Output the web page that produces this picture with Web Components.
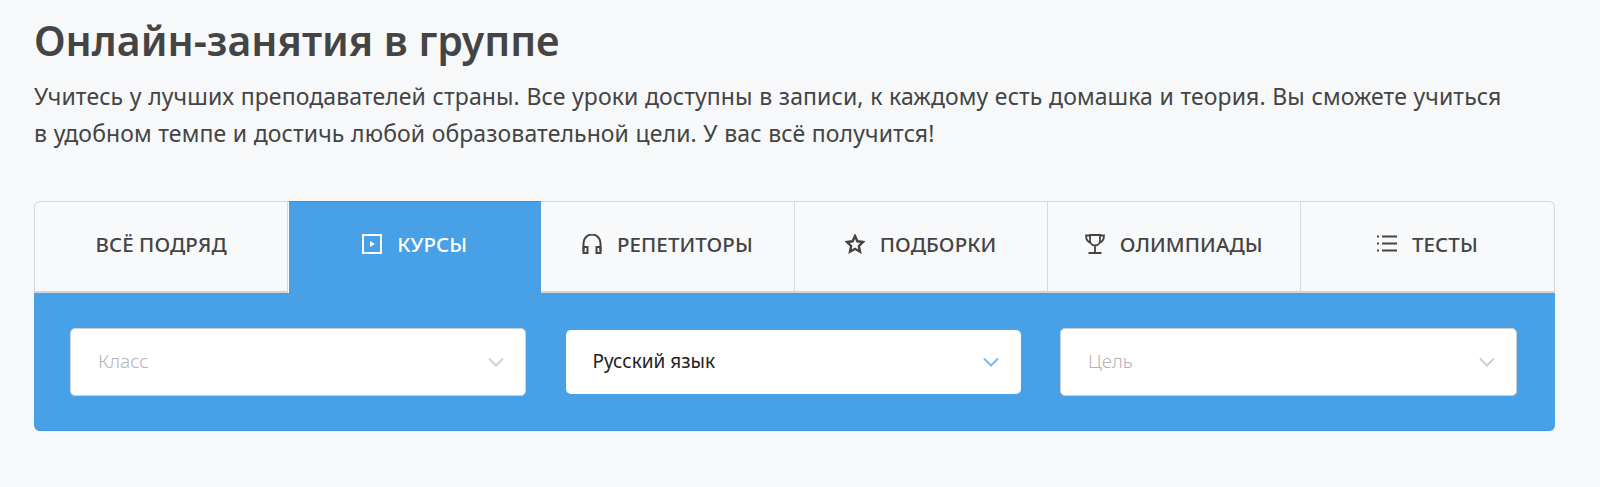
<!DOCTYPE html>
<html lang="ru">
<head>
<meta charset="utf-8">
<title>Онлайн-занятия в группе</title>
<style>
  html, body { margin: 0; background: #f7f8fa; }
  body { font-family: "Noto Sans", "Open Sans", sans-serif; }
</style>
</head>
<body>

<course-section>
  <span slot="title">Онлайн-занятия в группе</span>
  <span slot="lead">Учитесь у лучших преподавателей страны. Все уроки доступны в записи, к каждому есть домашка и теория. Вы сможете учиться<br>в удобном темпе и достичь любой образовательной цели. У вас всё получится!</span>
  <tab-bar slot="tabs">
    <tab-item>ВСЁ ПОДРЯД</tab-item>
    <tab-item active icon="play">КУРСЫ</tab-item>
    <tab-item icon="headphones">РЕПЕТИТОРЫ</tab-item>
    <tab-item icon="star">ПОДБОРКИ</tab-item>
    <tab-item icon="trophy">ОЛИМПИАДЫ</tab-item>
    <tab-item icon="list">ТЕСТЫ</tab-item>
  </tab-bar>
  <filter-panel slot="filters">
    <filter-select placeholder="Класс"></filter-select>
    <filter-select value="Русский язык"></filter-select>
    <filter-select placeholder="Цель"></filter-select>
  </filter-panel>
</course-section>

<script>
const ICONS = {
  play: '<rect x="1" y="1" width="18" height="18" fill="none" stroke="currentColor" stroke-width="2"/><path d="M8 7l5 3-5 3z" fill="currentColor"/>',
  headphones: '<path d="M1.500 17v-8a8.500 8.500 0 0 1 17 0v8" fill="none" stroke="currentColor" stroke-width="2"/><path d="M1.500 13h4v6h-4zM14.500 13h4v6h-4z" fill="none" stroke="currentColor" stroke-width="2"/>',
  star: '<path d="M10 2l2.400 5.300 5.600.7-4.100 3.900 1.100 5.800-5-2.900-5 2.900 1.100-5.800-4.100-3.900 5.600-.7z" fill="none" stroke="currentColor" stroke-width="2.400" stroke-linejoin="miter"/>',
  trophy: '<path d="M5 1h10v5.500a5 5 0 0 1-10 0zM5 1.500h-4c0 4.500 1.500 6.500 5 7.500M15 1.500h4c0 4.500-1.500 6.500-5 7.500M10 11.500v6.500M3.500 19h13" fill="none" stroke="currentColor" stroke-width="1.800"/>',
  list: '<path d="M5 2.500h15M5 9.500h15M5 16.500h15" stroke="currentColor" stroke-width="2"/><path d="M0 1.500h2v2h-2zM0 8.500h2v2h-2zM0 15.500h2v2h-2z" fill="currentColor"/>'
};

class CourseSection extends HTMLElement {
  constructor() {
    super();
    this.attachShadow({mode: 'open'}).innerHTML = `
      <style>
        :host { display: block; padding: 0 45px 0 34px; height: 487px; box-sizing: border-box; color: #444; }
        h1 { margin: 0; padding-top: 12px; font-size: 41px; line-height: 56px; font-weight: 600; color: #444; }
        p { margin: 10px 0 0; font-size: 23px; line-height: 37px; letter-spacing: .1px; word-spacing: .5px; font-weight: 400; color: #444; }
        .board { margin-top: 49px; }
      </style>
      <h1><slot name="title"></slot></h1>
      <p><slot name="lead"></slot></p>
      <div class="board">
        <slot name="tabs"></slot>
        <slot name="filters"></slot>
      </div>`;
  }
}

class TabBar extends HTMLElement {
  constructor() {
    super();
    this.attachShadow({mode: 'open'}).innerHTML = `
      <style>
        :host { display: grid; grid-template-columns: repeat(6, 1fr); height: 92px; box-sizing: border-box; background: #f8f9fb; border: 1px solid #d3d6da; border-bottom: 0; border-radius: 6px 6px 0 0; }
      </style>
      <slot></slot>`;
  }
}

class TabItem extends HTMLElement {
  constructor() {
    super();
    const name = this.getAttribute('icon');
    const icon = name ? `<svg viewBox="0 0 20 20" width="20" height="20">${ICONS[name]}</svg>` : '';
    this.attachShadow({mode: 'open'}).innerHTML = `
      <style>
        :host { display: flex; align-items: center; justify-content: center; gap: 15px; padding-bottom: 5px; font-size: 20.500px; letter-spacing: .1px; font-weight: 500; color: #444; border-right: 1px solid #d8dadd; border-bottom: 2px solid #d3d6da; }
        :host(:last-child) { border-right: 0; }
        :host([active]) { background: #48a0e6; color: #fff; border-color: #48a0e6; margin: -1px 0 0 1px; box-shadow: inset 0 1px 0 #2f93e0; }
        svg { flex: none; }
      </style>
      ${icon}<span><slot></slot></span>`;
  }
}

class FilterPanel extends HTMLElement {
  constructor() {
    super();
    this.attachShadow({mode: 'open'}).innerHTML = `
      <style>
        :host { display: grid; grid-template-columns: 456px 455px 457px; justify-content: space-between; align-items: center; height: 138px; padding: 0 38px 0 36px; box-sizing: border-box; background: #48a0e6; border-bottom: 1px solid #3a9ae6; border-radius: 0 0 6px 6px; }
      </style>
      <slot></slot>`;
  }
}

class FilterSelect extends HTMLElement {
  constructor() {
    super();
    const value = this.getAttribute('value');
    const text = value || this.getAttribute('placeholder');
    this.attachShadow({mode: 'open'}).innerHTML = `
      <style>
        :host { display: flex; align-items: center; justify-content: space-between; height: 68px; padding: 0 21px 0 27px; box-sizing: border-box; background: #fff; border: 1.500px solid #cdd1d6; border-radius: 5px; font-size: 19px; font-weight: 300; color: #b4b4b4; }
        :host([value]) { height: 64px; border: 0; padding: 0 22px 0 27px; font-weight: 400; color: #222; }
        span { margin-bottom: 2px; }
        svg { color: #d0d0d0; }
        :host([value]) svg { color: #79baf0; }
      </style>
      <span>${text}</span>
      <svg viewBox="0 0 16 10" width="16" height="10"><path d="M1 1.500l7 7 7-7" fill="none" stroke="currentColor" stroke-width="2"/></svg>`;
  }
}

customElements.define('course-section', CourseSection);
customElements.define('tab-bar', TabBar);
customElements.define('tab-item', TabItem);
customElements.define('filter-panel', FilterPanel);
customElements.define('filter-select', FilterSelect);
</script>
</body>
</html>
